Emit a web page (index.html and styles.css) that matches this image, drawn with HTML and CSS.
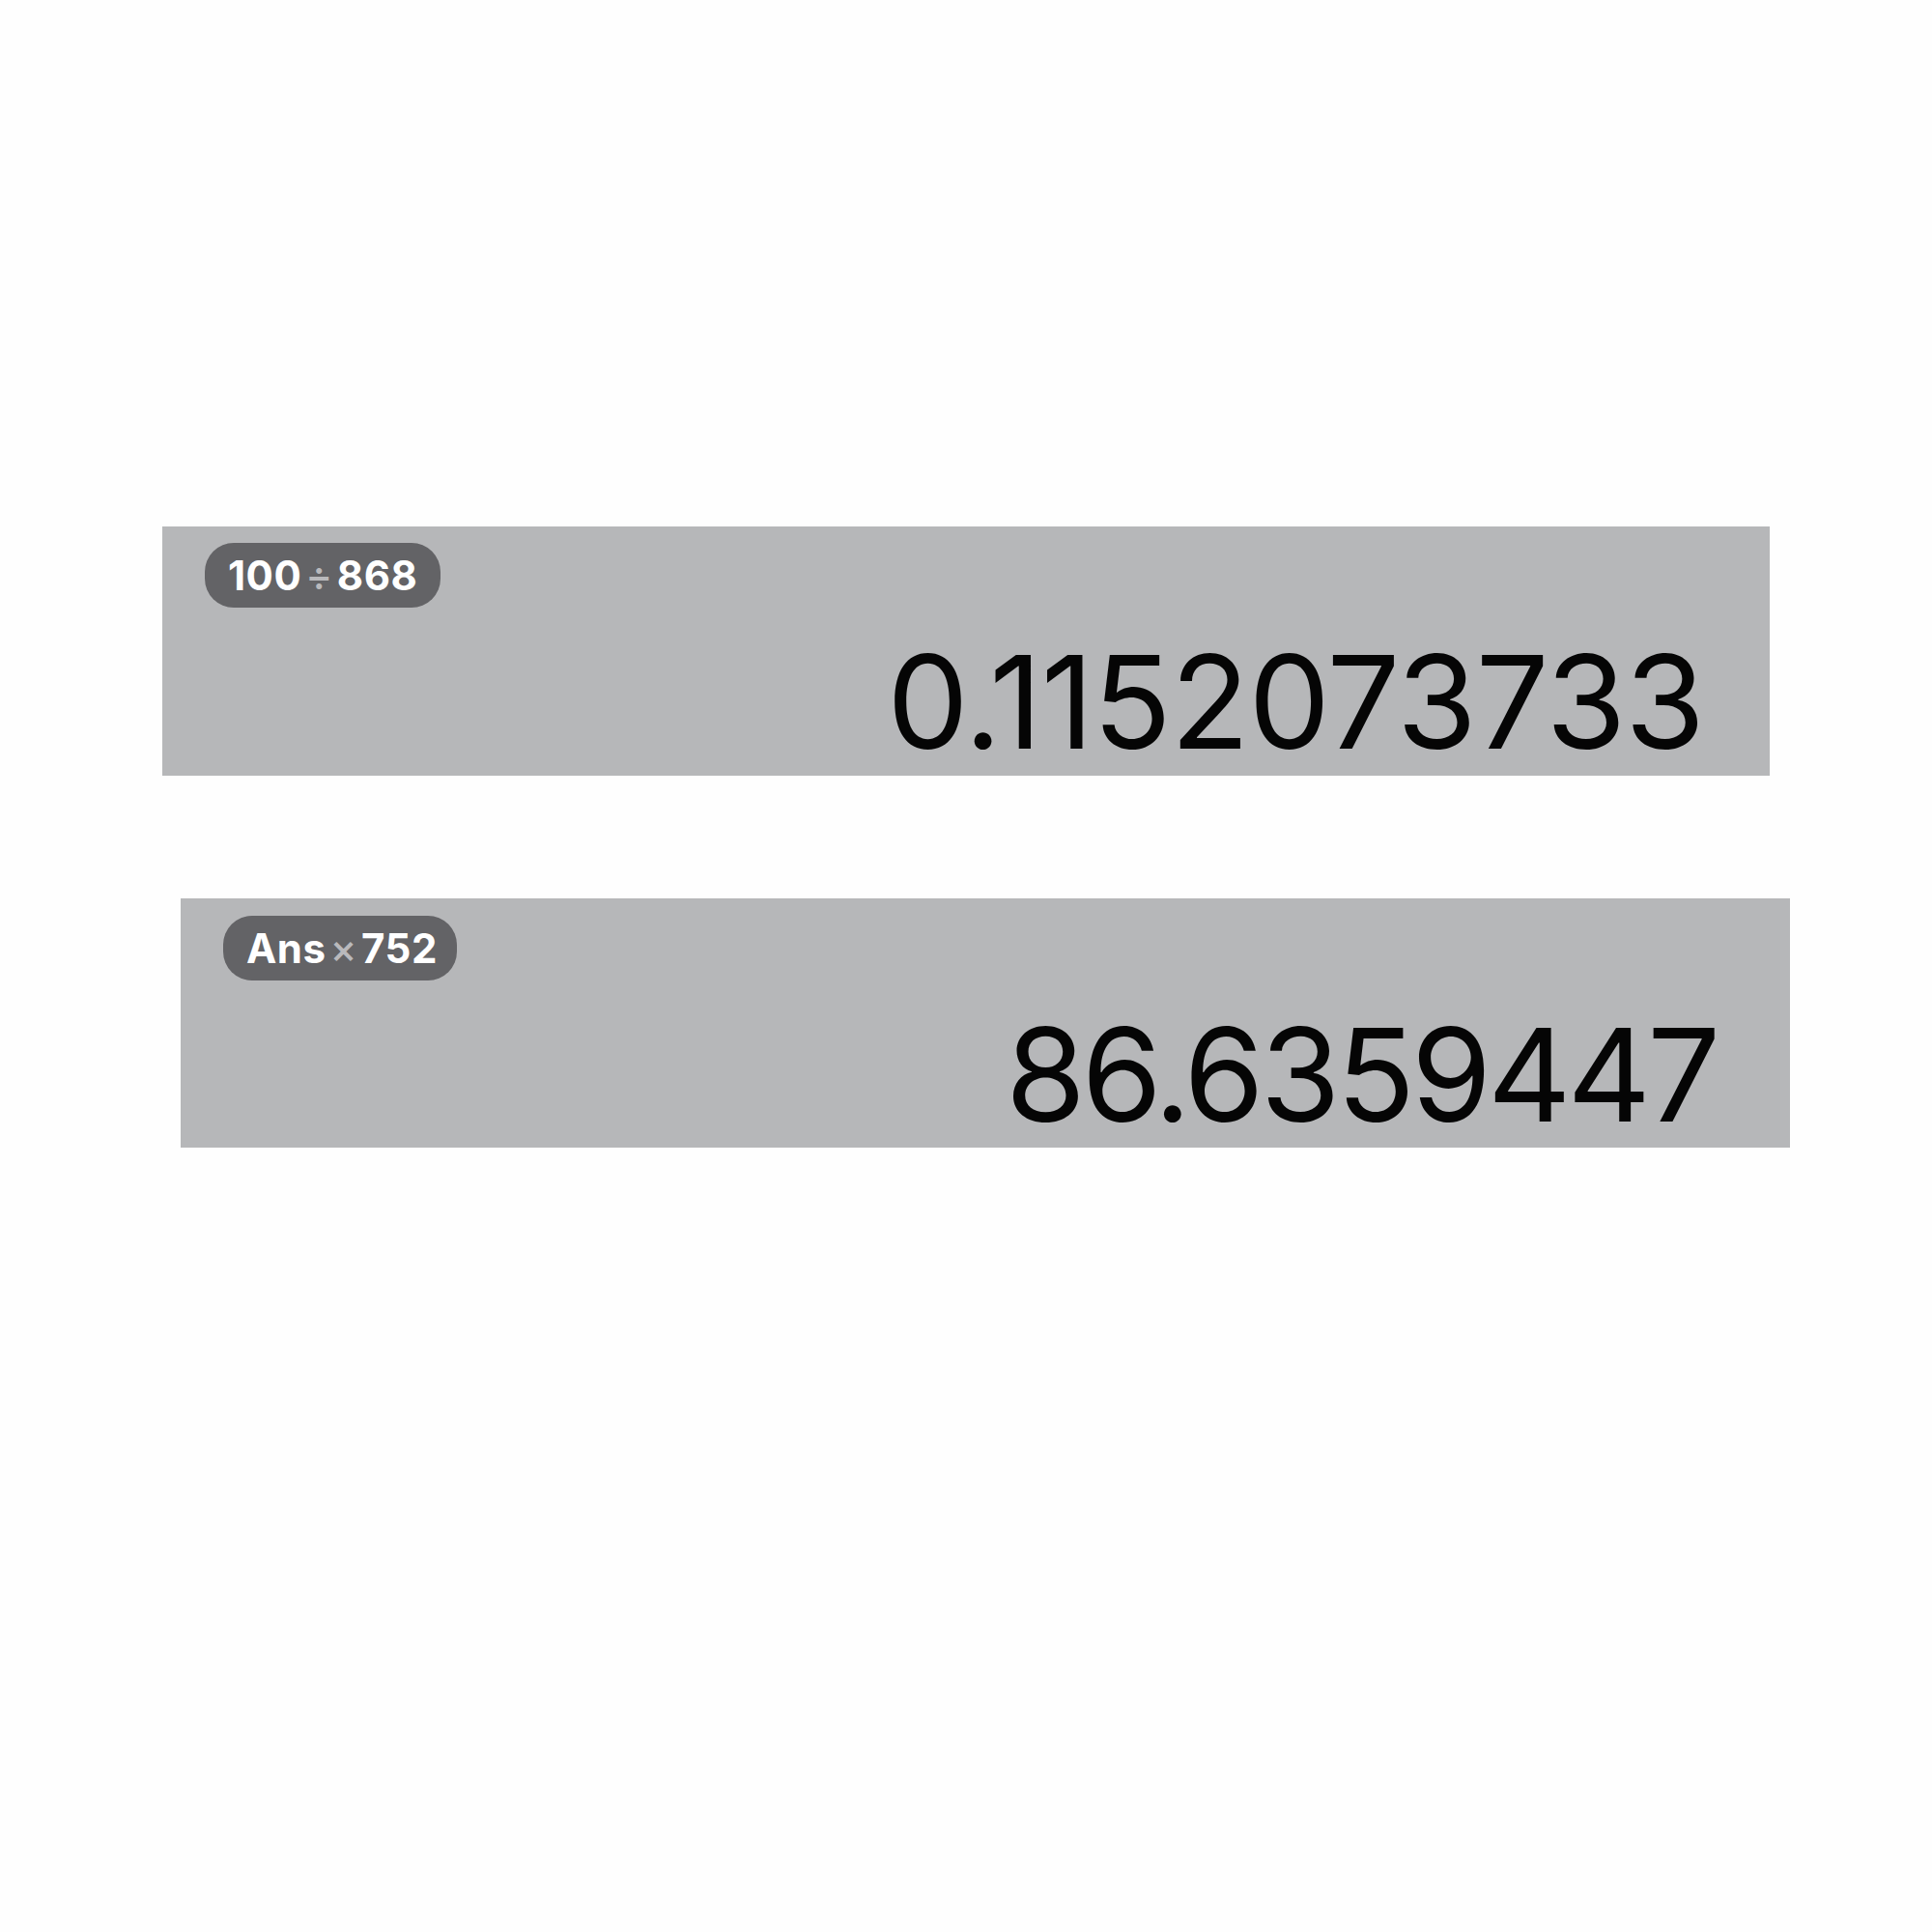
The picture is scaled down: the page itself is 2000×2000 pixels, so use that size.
FILE: index.html
```html
<!DOCTYPE html>
<html lang="en">
<head>
    <meta charset="UTF-8">
    <title>History</title>
    <link rel="stylesheet" href="styles.css">
</head>
<body>

    <!-- Calculation history -->
    <div class="history">
        <div class="entry entry-first">
            <div class="expr">100<span class="op">÷</span>868</div>
            <div class="result">0.1152073733</div>
        </div>

        <div class="entry entry-second">
            <div class="expr">Ans<span class="op">×</span>752</div>
            <div class="result">86.6359447</div>
        </div>
    </div>

</body>
</html>
```
FILE: styles.css
```css
* {
    margin: 0;
    padding: 0;
    box-sizing: border-box;
}

body {
    background-color: #fefefe;
    font-family: 'Inter', 'Noto Sans', sans-serif;
    width: 2000px;
    height: 2000px;
}

.history {
    display: flex;
    flex-direction: column;
    gap: 127px;
    padding-top: 545px;
}

.entry {
    display: flex;
    flex-direction: column;
    height: 258px;
    padding: 17px 68px 0 44px;
    background-color: #b6b7b9;
}

.entry-first {
    margin-left: 168px;
    width: 1664px;
}

.entry-second {
    margin-left: 187px;
    width: 1666px;
    padding-top: 18px;
    padding-right: 76px;
}

.expr {
    align-self: flex-start;
    display: flex;
    align-items: center;
    height: 67px;
    padding: 0 24px 0 24px;
    border-radius: 30px;
    background-color: #636366;
    color: #ffffff;
    font-size: 42px;
    font-weight: 700;
    letter-spacing: 0.5px;
}

.entry-second .expr {
    padding-right: 20px;
}

.op {
    color: #b9b9bc;
    font-weight: 500;
    margin: 0 4px;
}

.result {
    text-align: right;
    margin-top: 30px;
    font-size: 134px;
    line-height: 1;
    font-weight: 400;
    letter-spacing: -1px;
    color: #050505;
}

.entry-second .result {
    letter-spacing: -4px;
}
```
